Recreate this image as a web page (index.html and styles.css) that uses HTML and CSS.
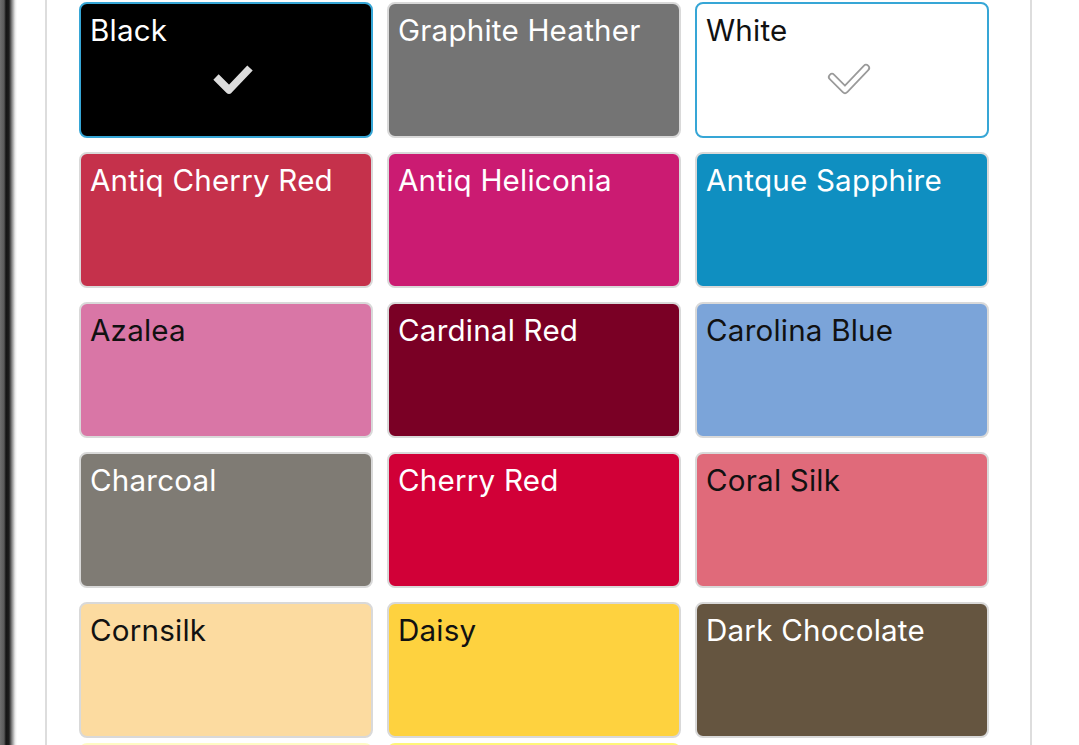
FILE: index.html
```html
<!DOCTYPE html>
<html lang="en">
<head>
<meta charset="UTF-8">
<meta name="viewport" content="width=device-width, initial-scale=1.0">
<title>Choose Color</title>
<link rel="stylesheet" href="styles.css">
</head>
<body>
<div class="page">
    <div class="drawerEdge"></div>
    <div class="colorPanel">
        <div class="swatchGrid">
            <div class="swatch dark selected" style="background-color:#000000">
                <span>Black</span>
                <svg class="check" width="46" height="36" viewBox="0 0 46 36">
                    <path d="M7 17 L20 30 L41 8" fill="none" stroke="#dcdcdc" stroke-width="7.5" stroke-linejoin="round"/>
                </svg>
            </div>
            <div class="swatch dark" style="background-color:#747474"><span>Graphite Heather</span></div>
            <div class="swatch selected" style="background-color:#ffffff">
                <span>White</span>
                <svg class="check" width="46" height="36" viewBox="0 0 46 36">
                    <path d="M7 17 L20 30 L41 8" fill="none" stroke="#9a9a9a" stroke-width="8" stroke-linejoin="round" stroke-linecap="round"/>
                    <path d="M7 17 L20 30 L41 8" fill="none" stroke="#ffffff" stroke-width="4.5" stroke-linejoin="round" stroke-linecap="round"/>
                </svg>
            </div>

            <div class="swatch dark" style="background-color:#c5314b"><span>Antiq Cherry Red</span></div>
            <div class="swatch dark" style="background-color:#cb1b72"><span>Antiq Heliconia</span></div>
            <div class="swatch dark" style="background-color:#0f8fc1"><span>Antque Sapphire</span></div>

            <div class="swatch" style="background-color:#d976a6"><span>Azalea</span></div>
            <div class="swatch dark" style="background-color:#7a0025"><span>Cardinal Red</span></div>
            <div class="swatch" style="background-color:#7ba4d9"><span>Carolina Blue</span></div>

            <div class="swatch dark" style="background-color:#7f7b74"><span>Charcoal</span></div>
            <div class="swatch dark" style="background-color:#d10037"><span>Cherry Red</span></div>
            <div class="swatch" style="background-color:#e06a7a"><span>Coral Silk</span></div>

            <div class="swatch" style="background-color:#fcdba0"><span>Cornsilk</span></div>
            <div class="swatch" style="background-color:#fed23f"><span>Daisy</span></div>
            <div class="swatch dark" style="background-color:#655540"><span>Dark Chocolate</span></div>

            <div class="swatch peek" style="background-color:#fffbc4"></div>
            <div class="swatch peek" style="background-color:#fff679"></div>
        </div>
    </div>
</div>
</body>
</html>
```

FILE: styles.css
```css
/* Color picker panel */
html, body {
    margin: 0;
    padding: 0;
    background: #fff;
    overflow: hidden;
}

body {
    font-family: Inter, "Noto Sans", sans-serif;
}

.page {
    display: flex;
    height: 745px;
}

.drawerEdge {
    width: 17px;
    flex-shrink: 0;
    background: linear-gradient(to right, #6e6e6e 0, #5a5a5a 4px, #141414 6px, #1c1c1c 9px, #8a8a8a 12px, #e8e8e8 15px, #fff 17px);
}

.colorPanel {
    margin-left: 28px;
    width: 987px;
    box-sizing: border-box;
    border-left: 2px solid #dddddd;
    border-right: 2px solid #dddddd;
    padding: 2px 43px 0 32px;
}

.swatchGrid {
    display: grid;
    grid-template-columns: repeat(3, 294px);
    grid-auto-rows: 136px;
    gap: 14px;
}

.swatch {
    position: relative;
    box-sizing: border-box;
    border: 2px solid #d9d9d9;
    border-radius: 8px;
    padding: 8px 10px 8px 9px;
    font-size: 29.6px;
    letter-spacing: 0.2px;
    color: #111;
}

.swatch.dark {
    color: #fff;
}

.swatch.selected {
    border-color: #36a6d6;
}

/* last row only peeks in at the bottom edge */
.swatch.peek {
    margin-top: -9px;
    border: none;
}

.check {
    position: absolute;
    left: 128px;
    top: 56px;
}
```
